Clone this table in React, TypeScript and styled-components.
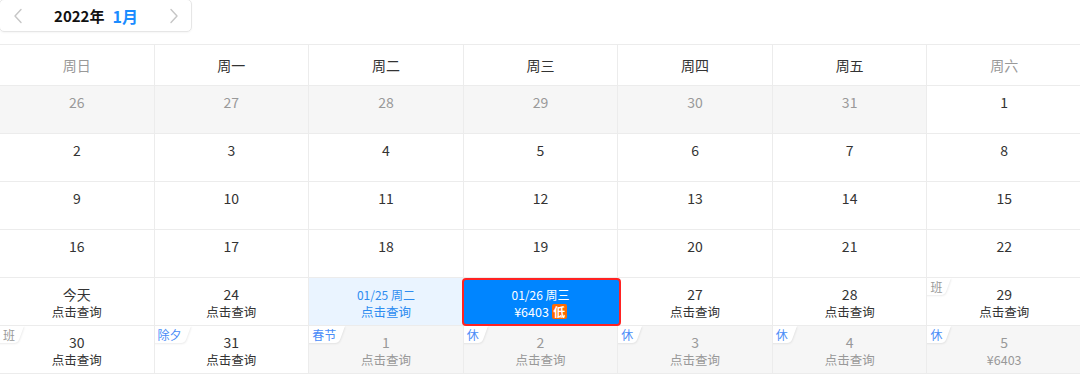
import React from "react";
import styled, { createGlobalStyle, css } from "styled-components";

const Global = createGlobalStyle`
  html, body { margin: 0; padding: 0; background: #fff; overflow: hidden; }
  body { font-family: "Noto Sans CJK SC", "Noto Sans", sans-serif; color: #333; }
`;

const Page = styled.div`
  width: 1080px;
  height: 378px;
  overflow: hidden;
  display: flex;
  flex-direction: column;
  gap: 12px;
`;

const Toolbar = styled.div`
  width: 193px;
  height: 33px;
  margin: -1px 0 0 -1px;
  box-sizing: border-box;
  border: 1px solid #e6e6e6;
  border-radius: 5px;
  display: flex;
  align-items: center;
  justify-content: space-between;
  padding: 0 12px 0 13px;
  box-shadow: 0 1px 2px rgba(0, 0, 0, 0.04);
`;

const Title = styled.div`
  display: flex;
  align-items: center;
  gap: 8px;
  font-size: 15px;
  font-weight: 700;
  color: #111;
`;

const Month = styled.span`
  color: #1a8cff;
  font-size: 16px;
`;

const Grid = styled.div`
  width: 1082px;
  flex-shrink: 0;
  display: grid;
  grid-template-columns: repeat(7, 1fr);
  border-top: 1px solid #ececec;
`;

const Head = styled.div<{ $weekend?: boolean }>`
  height: 40px;
  display: flex;
  align-items: center;
  justify-content: center;
  font-size: 14px;
  color: ${(p) => (p.$weekend ? "#999" : "#333")};
  border-bottom: 1px solid #ececec;
  border-right: 1px solid #ececec;
`;

type Variant = "normal" | "muted" | "soft" | "selected";

const Cell = styled.div<{ $variant: Variant }>`
  position: relative;
  height: 47px;
  border-bottom: 1px solid #ececec;
  border-right: 1px solid #ececec;
  display: flex;
  flex-direction: column;
  align-items: center;
  overflow: hidden;
  background: ${(p) =>
    p.$variant === "muted" ? "#f6f6f6" : p.$variant === "soft" ? "#eaf4ff" : "#fff"};
  ${(p) =>
    p.$variant === "selected" &&
    css`
      z-index: 2;
      overflow: visible;
    `}
`;

const Content = styled.div<{ $variant: Variant }>`
  position: relative;
  z-index: 1;
  padding-top: 8px;
  display: flex;
  flex-direction: column;
  align-items: center;
  color: ${(p) =>
    p.$variant === "muted"
      ? "#999"
      : p.$variant === "soft"
      ? "#2d8cf0"
      : p.$variant === "selected"
      ? "#fff"
      : "#333"};
`;

const Primary = styled.div<{ $small?: boolean }>`
  font-size: ${(p) => (p.$small ? "12px" : "14px")};
  line-height: 17px;
`;

const Secondary = styled.div`
  font-size: 12.5px;
  line-height: 17px;
  display: flex;
  align-items: center;
  gap: 3px;
  color: inherit;
`;

const Selection = styled.div`
  position: absolute;
  top: 0;
  bottom: -1px;
  left: -2px;
  right: -4px;
  box-sizing: border-box;
  background: #0085ff;
  border: 2px solid #ff2222;
  border-radius: 4px;
`;

const Low = styled.span`
  display: inline-flex;
  align-items: center;
  justify-content: center;
  width: 15px;
  height: 15px;
  border-radius: 2px;
  background: #ff6a00;
  color: #fff;
  font-size: 12px;
  font-weight: 700;
  line-height: 1;
`;

const Tag = styled.span<{ $blue?: boolean }>`
  position: absolute;
  top: 0;
  left: 0;
  height: 17px;
  padding: 0 9px 0 3px;
  font-size: 12px;
  line-height: 17px;
  color: ${(p) => (p.$blue ? "#4a8cf7" : "#999")};
  z-index: 1;
  &::before {
    content: "";
    position: absolute;
    top: 0;
    bottom: 0;
    left: -12px;
    right: 0;
    background: #fff;
    transform: skewX(-20deg);
    transform-origin: top left;
    border-bottom-right-radius: 4px;
    box-shadow: 1px 1px 2px rgba(0, 0, 0, 0.08);
    z-index: -1;
  }
`;

const Chevron = ({ dir }: { dir: "left" | "right" }) => (
  <svg width="10" height="16" viewBox="0 0 10 16" fill="none">
    <polyline
      points={dir === "left" ? "8,1.5 2,8 8,14.5" : "2,1.5 8,8 2,14.5"}
      stroke="#c6c6c6"
      strokeWidth="1.4"
      strokeLinejoin="round"
      strokeLinecap="round"
    />
  </svg>
);

type Day = {
  primary: string;
  secondary?: string;
  variant?: Variant;
  tag?: string;
  tagBlue?: boolean;
  low?: boolean;
};

const heads = ["周日", "周一", "周二", "周三", "周四", "周五", "周六"];

const q = "点击查询";

const rows: Day[][] = [
  [
    { primary: "26", variant: "muted" },
    { primary: "27", variant: "muted" },
    { primary: "28", variant: "muted" },
    { primary: "29", variant: "muted" },
    { primary: "30", variant: "muted" },
    { primary: "31", variant: "muted" },
    { primary: "1" },
  ],
  ["2", "3", "4", "5", "6", "7", "8"].map((d) => ({ primary: d })),
  ["9", "10", "11", "12", "13", "14", "15"].map((d) => ({ primary: d })),
  ["16", "17", "18", "19", "20", "21", "22"].map((d) => ({ primary: d })),
  [
    { primary: "今天", secondary: q },
    { primary: "24", secondary: q },
    { primary: "01/25 周二", secondary: q, variant: "soft" },
    { primary: "01/26 周三", secondary: "¥6403", variant: "selected", low: true },
    { primary: "27", secondary: q },
    { primary: "28", secondary: q },
    { primary: "29", secondary: q, tag: "班" },
  ],
  [
    { primary: "30", secondary: q, tag: "班" },
    { primary: "31", secondary: q, tag: "除夕", tagBlue: true },
    { primary: "1", secondary: q, tag: "春节", tagBlue: true, variant: "muted" },
    { primary: "2", secondary: q, tag: "休", tagBlue: true, variant: "muted" },
    { primary: "3", secondary: q, tag: "休", tagBlue: true, variant: "muted" },
    { primary: "4", secondary: q, tag: "休", tagBlue: true, variant: "muted" },
    { primary: "5", secondary: "¥6403", tag: "休", tagBlue: true, variant: "muted" },
  ],
];

export default function App() {
  return (
    <>
      <Global />
      <Page>
        <Toolbar>
          <Chevron dir="left" />
          <Title>
            <span>2022年</span>
            <Month>1月</Month>
          </Title>
          <Chevron dir="right" />
        </Toolbar>
        <Grid>
          {heads.map((h, i) => (
            <Head key={h} $weekend={i === 0 || i === 6}>
              {h}
            </Head>
          ))}
          {rows.map((row, ri) =>
            row.map((d, ci) => {
              const v: Variant = d.variant ?? "normal";
              return (
                <Cell key={`${ri}-${ci}`} $variant={v}>
                  {v === "selected" && <Selection />}
                  {d.tag && <Tag $blue={d.tagBlue}>{d.tag}</Tag>}
                  <Content $variant={v}>
                    <Primary $small={v === "soft" || v === "selected"}>{d.primary}</Primary>
                    {d.secondary && (
                      <Secondary>
                        {d.secondary}
                        {d.low && <Low>低</Low>}
                      </Secondary>
                    )}
                  </Content>
                </Cell>
              );
            })
          )}
        </Grid>
      </Page>
    </>
  );
}
